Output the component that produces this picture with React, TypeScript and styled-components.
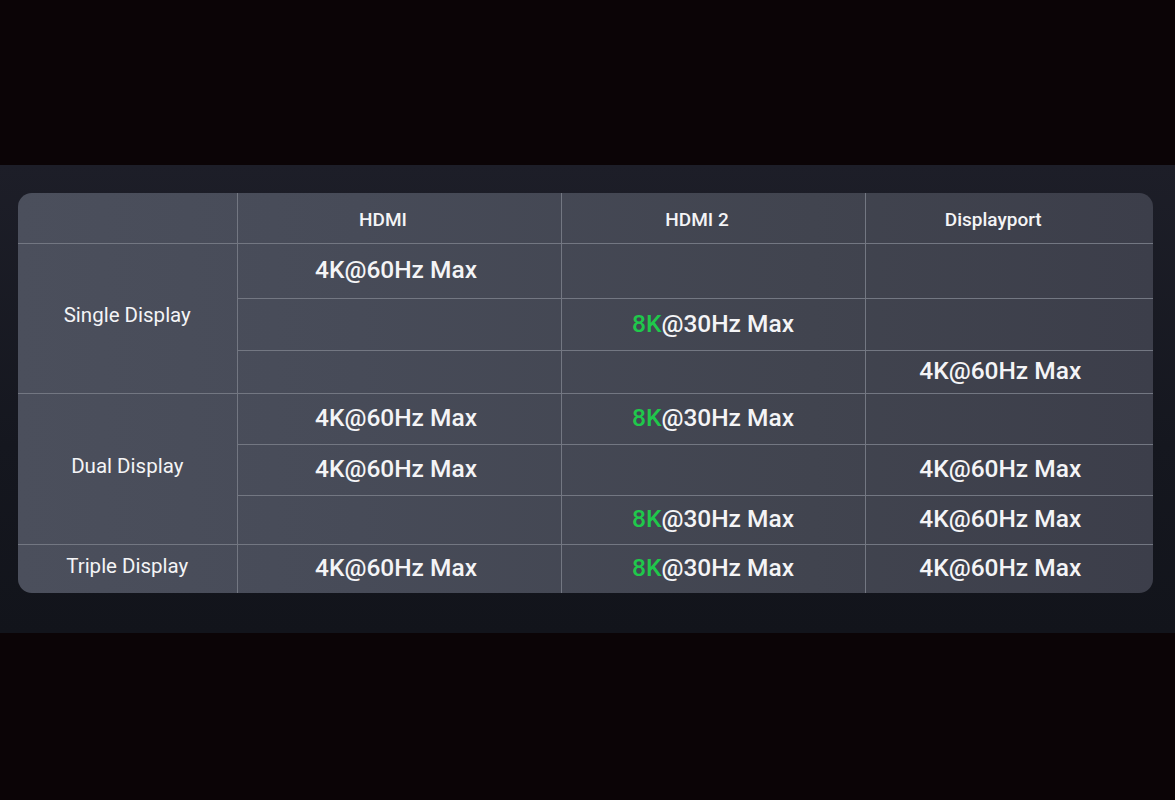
import { createGlobalStyle, styled } from 'styled-components';

const GlobalStyle = createGlobalStyle`
  html, body {
    margin: 0;
    padding: 0;
    background: #0b0406;
  }
  body {
    font-family: Roboto, 'Noto Sans', sans-serif;
    color: #f4f4f6;
  }
`;

const Page = styled.div`
  width: 1175px;
  height: 800px;
  padding-top: 165px;
  box-sizing: border-box;
`;

const Section = styled.section`
  height: 468px;
  padding: 28px 22px 0 18px;
  box-sizing: border-box;
  background: linear-gradient(180deg, #1d1e28 0%, #15171f 60%, #12141b 100%);
`;

const TableWrap = styled.div`
  border-radius: 14px;
  overflow: hidden;
  background: linear-gradient(90deg, #4b4f5c 0%, #474b58 30%, #41444f 70%, #3c3e4a 100%);
`;

const Table = styled.table`
  width: 100%;
  border-collapse: collapse;
  border-style: hidden;
  table-layout: fixed;
`;

const HeadRow = styled.tr`
  height: 50px;
`;

const HeadCell = styled.th`
  padding: 3px 32px 0 0;
  font-size: 19px;
  font-weight: 500;
  text-align: center;
  border: 1px solid #737782;
`;

const LabelCell = styled.td`
  font-size: 20.5px;
  font-weight: 400;
  text-align: center;
  border: 1px solid #737782;
  padding: 0 0 6px;
`;

const ValueCell = styled.td<{ $shift?: number }>`
  font-size: 24.5px;
  font-weight: 500;
  text-align: center;
  border: 1px solid #737782;
  padding: 0 ${({ $shift }) => $shift ?? 0}px 2px 0;
`;

const Row = styled.tr<{ $h: number }>`
  height: ${({ $h }) => $h}px;
`;

const Green = styled.span`
  color: #1fc84b;
`;

const FourK = () => <>4K@60Hz Max</>;
const EightK = () => (
  <>
    <Green>8K</Green>@30Hz Max
  </>
);

type Cell = 'four' | 'eight' | null;

const rows: { label?: string; span?: number; h: number; cells: Cell[] }[] = [
  { label: 'Single Display', span: 3, h: 55, cells: ['four', null, null] },
  { h: 52, cells: [null, 'eight', null] },
  { h: 43, cells: [null, null, 'four'] },
  { label: 'Dual Display', span: 3, h: 51, cells: ['four', 'eight', null] },
  { h: 51, cells: ['four', null, 'four'] },
  { h: 49, cells: [null, 'eight', 'four'] },
  { label: 'Triple Display', span: 1, h: 49, cells: ['four', 'eight', 'four'] },
];

const App = () => (
  <>
    <GlobalStyle />
    <Page>
      <Section>
        <TableWrap>
          <Table>
            <colgroup>
              <col style={{ width: 219 }} />
              <col style={{ width: 324 }} />
              <col style={{ width: 304 }} />
              <col style={{ width: 288 }} />
            </colgroup>
            <thead>
              <HeadRow>
                <HeadCell />
                <HeadCell>HDMI</HeadCell>
                <HeadCell>HDMI 2</HeadCell>
                <HeadCell>Displayport</HeadCell>
              </HeadRow>
            </thead>
            <tbody>
              {rows.map((row, i) => (
                <Row key={i} $h={row.h}>
                  {row.label && <LabelCell rowSpan={row.span}>{row.label}</LabelCell>}
                  {row.cells.map((c, j) => (
                    <ValueCell key={j} $shift={j === 0 ? 6 : j === 2 ? 18 : 0}>
                      {c === 'four' && <FourK />}
                      {c === 'eight' && <EightK />}
                    </ValueCell>
                  ))}
                </Row>
              ))}
            </tbody>
          </Table>
        </TableWrap>
      </Section>
    </Page>
  </>
);

export default App;
